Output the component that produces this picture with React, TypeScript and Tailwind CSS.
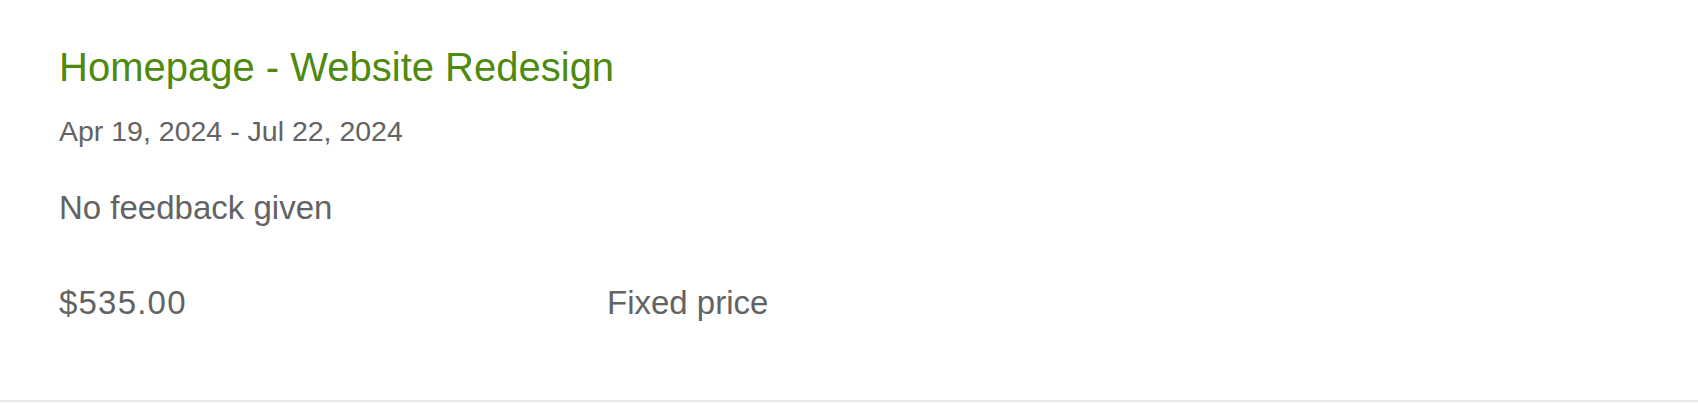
import React from "react";

const job = {
  title: "Homepage - Website Redesign",
  period: "Apr 19, 2024 - Jul 22, 2024",
  feedback: "No feedback given",
  amount: "$535.00",
  kind: "Fixed price",
};

export default function App() {
  return (
    <div className="w-full bg-white font-['Liberation_Sans',Arial,sans-serif]">
      <div className="border-b-2 border-[#e8e8e8] pl-[59px] pt-[43px] pb-[77px]">
        <h2 className="text-[40px] leading-[48px] text-[#4f8a10]">{job.title}</h2>
        <div className="mt-[24px] text-[28.5px] leading-[32px] text-[#636363]">{job.period}</div>
        <div className="mt-[41px] text-[33px] leading-[40px] text-[#636363]">{job.feedback}</div>
        <div className="mt-[55px] flex text-[33px] leading-[40px] text-[#636363]">
          <span className="w-[548px] tracking-[1.2px]">{job.amount}</span>
          <span>{job.kind}</span>
        </div>
      </div>
    </div>
  );
}
